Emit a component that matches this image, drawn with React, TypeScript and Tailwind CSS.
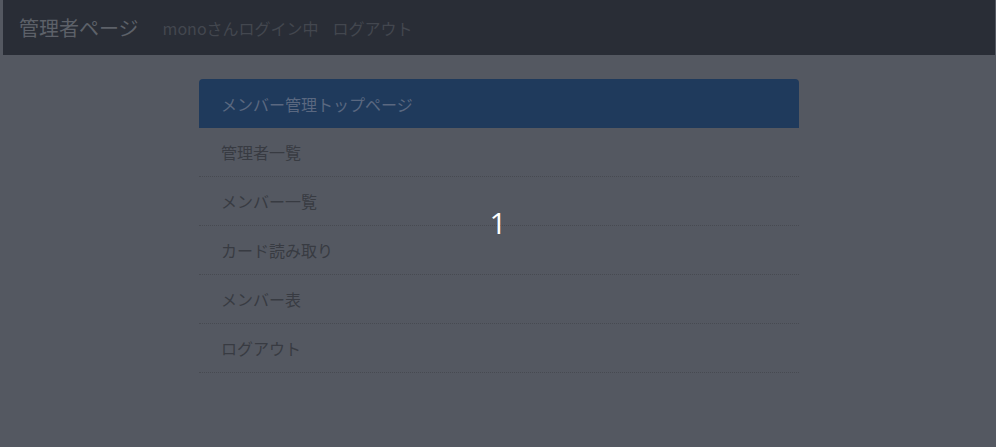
import React from 'react';

const menuItems = ['管理者一覧', 'メンバー一覧', 'カード読み取り', 'メンバー表', 'ログアウト'];

const App = () => {
  return (
    <div
      className="relative h-[447px] w-full overflow-hidden bg-[#545861]"
      style={{ fontFamily: '"Noto Sans CJK JP", "Noto Sans", sans-serif' }}
    >
      {/* Navbar */}
      <div className="pl-[3px] pr-px">
        <nav className="flex h-[55px] items-center bg-[#292d36] pl-4">
          <span className="text-[20px] leading-none text-[#5d6169]">管理者ページ</span>
          <span className="ml-[24px] text-[16px] leading-none text-[#43474f]">monoさんログイン中</span>
          <span className="ml-[14px] text-[16px] leading-none text-[#43474f]">ログアウト</span>
        </nav>
      </div>

      {/* Menu list */}
      <div className="mt-[24px] flex justify-center pl-[2px]">
        <div className="w-[600px]">
          <div className="flex h-[49px] items-center rounded-t-[4px] bg-[#1f3a5c] pl-[22px] text-[16px] text-[#5a6880]">
            メンバー管理トップページ
          </div>
          {menuItems.map((item) => (
            <div
              key={item}
              className="flex h-[49px] items-center border-b border-dotted border-[#474a51] pl-[22px] text-[16px] text-[#383b42]"
            >
              {item}
            </div>
          ))}
        </div>
      </div>

      {/* Counter overlay */}
      <div
        className="absolute left-1/2 top-[208px] -translate-x-1/2 text-[30px] leading-none text-white"
        style={{ fontFamily: '"Open Sans", sans-serif' }}
      >
        1
      </div>
    </div>
  );
};

export default App;
